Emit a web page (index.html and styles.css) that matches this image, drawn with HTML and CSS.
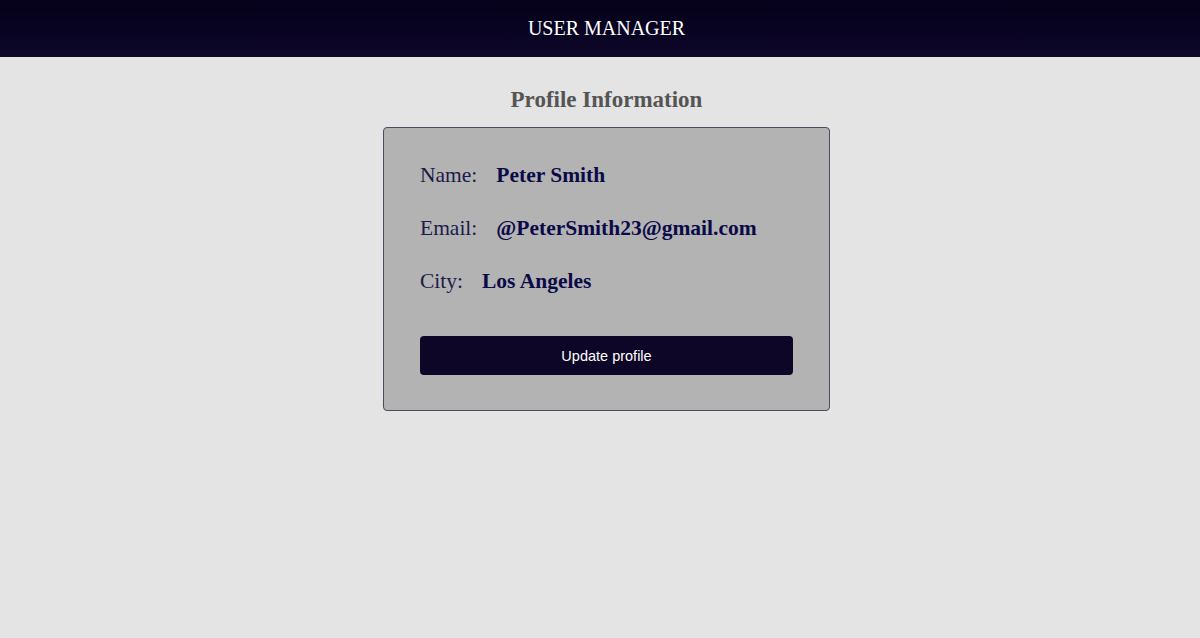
FILE: index.html
```html
<!DOCTYPE html>
<html lang="en">
<head>
  <meta charset="UTF-8">
  <title>User Manager</title>
  <meta name="viewport" content="width=device-width, initial-scale=1.0">
  <link rel="stylesheet" href="styles.css">
</head>
<body>
  <header class="topbar">USER MANAGER</header>

  <main class="content">
    <h2 class="title">Profile Information</h2>

    <div class="card">
      <div class="row">
        <span class="label">Name:</span>
        <span class="value">Peter Smith</span>
      </div>
      <div class="row">
        <span class="label">Email:</span>
        <span class="value">@PeterSmith23@gmail.com</span>
      </div>
      <div class="row">
        <span class="label">City:</span>
        <span class="value">Los Angeles</span>
      </div>

      <button class="btn">Update profile</button>
    </div>
  </main>
</body>
</html>
```

FILE: styles.css
```css
body {
  margin: 0;
  font-family: "Liberation Serif", "Times New Roman", serif;
  background-color: #e4e4e4;
}
.topbar {
  height: 57px;
  padding-left: 13px;
  display: flex;
  align-items: center;
  justify-content: center;
  background: linear-gradient(to bottom, #04011a, #0e0629);
  color: #fff;
  font-size: 20px;
}
.content {
  padding-left: 13px;
  display: flex;
  flex-direction: column;
  align-items: center;
}
.title {
  margin: 30px 0 14px;
  font-size: 23px;
  line-height: 26px;
  color: #555;
}
.card {
  width: 373px;
  padding: 35px 36px 35px;
  background-color: #b3b3b3;
  border: 1px solid #4d4b5e;
  border-radius: 4px;
}
.row {
  display: flex;
  gap: 19px;
  font-size: 21.5px;
  line-height: 25px;
  margin-bottom: 28px;
}
.row:last-of-type {
  margin-bottom: 42px;
}
.label {
  color: #1d1a4a;
}
.value {
  color: #0b0a48;
  font-weight: bold;
}
.btn {
  display: block;
  width: 100%;
  height: 39px;
  border: none;
  border-radius: 4px;
  background-color: #0d0626;
  color: #fff;
  font-family: "Liberation Sans", Arial, sans-serif;
  font-size: 14.5px;
  cursor: pointer;
}
```
